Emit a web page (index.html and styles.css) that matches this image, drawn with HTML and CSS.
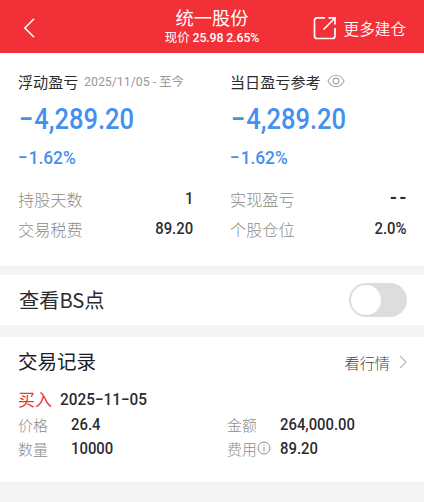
FILE: index.html
```html
<!DOCTYPE html>
<html lang="zh-CN">
<head>
<meta charset="utf-8">
<title>统一股份</title>
<link rel="stylesheet" href="styles.css">
</head>
<body>
<header class="topbar">
  <svg class="back" viewBox="0 0 14 22"><path d="M12 1 2 11l10 10"/></svg>
  <div class="heading">
    <h1>统一股份</h1>
    <p>现价 <span class="quote">25.98 2.65%</span></p>
  </div>
  <div class="more">
    <svg viewBox="0 0 24 24"><path d="M12 1.8H4A2.5 2.5 0 0 0 1.500 4.300V20A2.500 2.500 0 0 0 4 22.500H19.500A2.500 2.500 0 0 0 22 20V12M10.500 13.500 22 2M15.500 1.800H22V8.500"/></svg>
    <span>更多建仓</span>
  </div>
</header>
<section class="summary">
  <div class="col">
    <div class="label">浮动盈亏<span class="since"><span class="num">2025/11/05 -</span> 至今</span></div>
    <div class="amount"><span class="num"><span class="minus">−</span>4,289.20</span></div>
    <div class="percent"><span class="num"><span class="minus">−</span>1.62%</span></div>
    <div class="row"><span>持股天数</span><span class="num value">1</span></div>
    <div class="row"><span>交易税费</span><span class="num value">89.20</span></div>
  </div>
  <div class="col">
    <div class="label">当日盈亏参考<svg class="eye" viewBox="0 0 18 14"><path d="M1 7C3 3 5.800 1.200 9 1.200S15 3 17 7C15 11 12.200 12.800 9 12.800S3 11 1 7Z"/><circle cx="9" cy="7" r="2.900"/></svg></div>
    <div class="amount"><span class="num"><span class="minus">−</span>4,289.20</span></div>
    <div class="percent"><span class="num"><span class="minus">−</span>1.62%</span></div>
    <div class="row"><span>实现盈亏</span><span class="num value dashes">--</span></div>
    <div class="row"><span>个股仓位</span><span class="num value">2.0%</span></div>
  </div>
</section>
<section class="points">
  <span>查看BS点</span>
  <span class="toggle"></span>
</section>
<section class="records">
  <div class="records-head">
    <h2>交易记录</h2>
    <span class="market">看行情<svg viewBox="0 0 8 14"><path d="m1 1 6 6-6 6"/></svg></span>
  </div>
  <div class="trade"><span class="buy">买入</span><span class="num date">2025−11−05</span></div>
  <div class="details">
    <span class="key">价格</span><span class="num">26.4</span>
    <span class="key">金额</span><span class="num">264,000.00</span>
    <span class="key">数量</span><span class="num">10000</span>
    <span class="key">费用<svg class="info" viewBox="0 0 14 14"><circle cx="7" cy="7" r="6"/><path d="M7 6v4.500M7 3.500v1.200"/></svg></span><span class="num">89.20</span>
  </div>
</section>
</body>
</html>
```
FILE: styles.css
```css
* { box-sizing: border-box; }
body {
  margin: 0;
  min-height: 502px;
  background: #f4f4f4;
  color: #2b2b2f;
  font-family: "Noto Sans CJK SC", sans-serif;
  font-weight: 400;
  white-space: nowrap;
}
h1, h2, p { margin: 0; font-weight: 400; }
svg { fill: none; stroke: currentColor; flex: none; }
.num {
  display: inline-block;
  font-family: Roboto, sans-serif;
  font-weight: 500;
  transform: scaleX(.9);
  transform-origin: left center;
}
.topbar {
  display: grid;
  grid-template-columns: 1fr auto 1fr;
  align-items: center;
  height: 53px;
  padding: 0 18px 0 18px;
  background: #f23038;
  color: #fff;
}
.back { width: 13px; height: 22px; margin: 3px 0 0 5px; stroke-width: 1.7; }
.heading { text-align: center; }
.heading h1 { font-size: 18.3px; line-height: 20px; }
.heading p { padding-top: 1px; font-size: 12.5px; line-height: 18px; }
.quote { font-family: Roboto, sans-serif; font-size: 12.3px; font-weight: 500; letter-spacing: -.1px; }
.more {
  display: flex;
  justify-content: flex-end;
  align-items: center;
  gap: 7px;
  padding-top: 3px;
  font-size: 15.6px;
  font-weight: 350;
}
.more svg { width: 24px; height: 24px; stroke-width: 1.7; }
.summary {
  display: grid;
  grid-template-columns: 175px 176px;
  column-gap: 37px;
  height: 213px;
  padding: 16px 18px 0;
  background: #fff;
}
.label { display: flex; align-items: center; height: 24px; font-size: 15.1px; }
.since { margin-left: 6px; color: #999; font-size: 12.3px; }
.since .num { font-size: 13px; font-weight: 400; margin-right: -4px; transform: scaleX(.95); }
.eye { width: 18px; height: 14px; margin-left: 6px; color: #aaa; stroke-width: 1.1; }
.minus { display: inline-block; }
.amount { height: 46px; line-height: 46px; color: #4490ee; font-size: 29.5px; }
.amount .num { margin-left: 1px; transform: scaleX(.865); }
.amount .minus { margin-right: 1px; }
.percent { height: 30px; line-height: 30px; margin-top: 2px; color: #4490ee; font-size: 19px; }
.percent .num { transform: scaleX(.91); }
.percent .minus { margin-right: 1px; }
.row {
  display: flex;
  justify-content: space-between;
  height: 29.500px;
  line-height: 29.500px;
  color: #8c8c8c;
  font-size: 16.2px;
  font-weight: 300;
}
.percent + .row { margin-top: 14px; }
.value { color: #2b2b2f; transform-origin: right center; font-size: 16.5px; line-height: 27px; }
.dashes { font-size: 22px; line-height: 26px; letter-spacing: 3px; margin-right: -3px; }
.points {
  display: flex;
  align-items: center;
  justify-content: space-between;
  height: 50px;
  margin-top: 9px;
  padding: 0 17px 0 19px;
  background: #fff;
  font-size: 20.2px;
}
.points span:first-child { margin-top: -1px; }
.toggle { width: 58px; height: 34px; padding: 2px; border-radius: 17px; background: #ddd; }
.toggle::before { content: ""; display: block; width: 30px; height: 30px; border-radius: 50%; background: #fff; }
.records { height: 145px; margin-top: 12px; padding: 9px 17px 0 18px; background: #fff; }
.records-head { display: flex; justify-content: space-between; align-items: center; height: 32px; }
.records h2 { margin-top: -3px; font-size: 19.5px; color: #1c1c1f; }
.market { display: flex; align-items: center; font-size: 15.2px; font-weight: 300; color: #444; }
.market svg { width: 8px; height: 14px; margin-left: 9px; color: #bbb; stroke-width: 1.3; }
.trade { display: flex; align-items: center; height: 26px; margin-top: 8px; font-size: 16.5px; }
.buy { width: 42px; color: #f03036; font-size: 17px; margin-top: -1px; }
.date { transform: scaleX(.93); }
.details {
  display: grid;
  grid-template-columns: 53px 156px 53px 1fr;
  grid-auto-rows: 24px;
  align-items: center;
  font-size: 16.5px;
}
.key { display: flex; align-items: center; color: #8c8c8c; font-size: 14.9px; font-weight: 300; }
.info { width: 14px; height: 14px; stroke-width: 1; }
```
